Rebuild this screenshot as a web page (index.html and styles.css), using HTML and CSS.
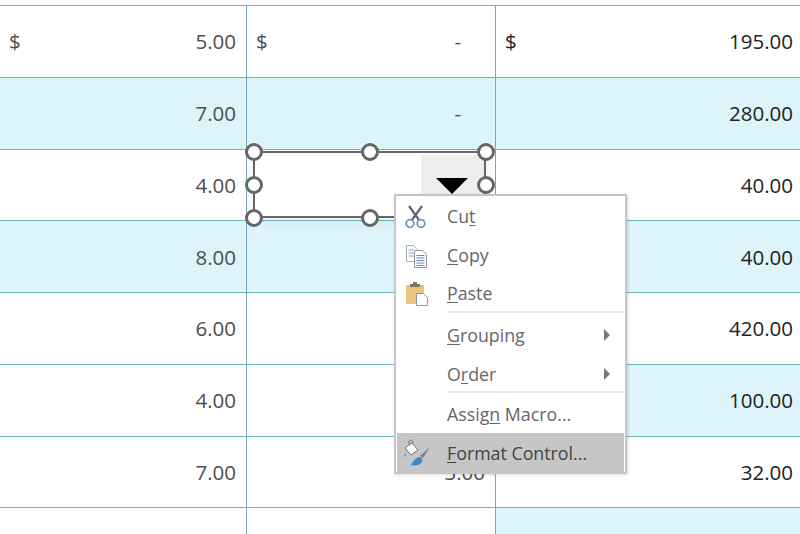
FILE: index.html
```html
<!DOCTYPE html>
<html lang="en">
<head>
    <meta charset="UTF-8">
    <title>Format Control</title>
    <link rel="stylesheet" href="styles.css">
</head>
<body>
    <div class="sheet">
        <div class="row"><div class="cell"><span class="cur">$</span><span>5.00</span></div><div class="cell"><span class="cur">$</span><span class="dash">-</span></div><div class="cell dark"><span class="cur">$</span><span>195.00</span></div></div>
        <div class="row tint"><div class="cell"><span></span><span>7.00</span></div><div class="cell"><span></span><span class="dash">-</span></div><div class="cell dark"><span></span><span>280.00</span></div></div>
        <div class="row"><div class="cell"><span></span><span>4.00</span></div><div class="cell"></div><div class="cell dark"><span></span><span>40.00</span></div></div>
        <div class="row tint"><div class="cell"><span></span><span>8.00</span></div><div class="cell"></div><div class="cell dark"><span></span><span>40.00</span></div></div>
        <div class="row"><div class="cell"><span></span><span>6.00</span></div><div class="cell"></div><div class="cell dark"><span></span><span>420.00</span></div></div>
        <div class="row"><div class="cell"><span></span><span>4.00</span></div><div class="cell"></div><div class="cell dark tint"><span></span><span>100.00</span></div></div>
        <div class="row"><div class="cell"><span></span><span>7.00</span></div><div class="cell"><span></span><span>3.00</span></div><div class="cell dark"><span></span><span>32.00</span></div></div>
        <div class="row row-last"><div class="cell"></div><div class="cell"></div><div class="cell dark tint"></div></div>
    </div>

    <!-- form control with its handles -->
    <div class="control">
        <div class="arrow-box"><div class="arrow"></div></div>
        <i class="handle h-tl"></i><i class="handle h-tm"></i><i class="handle h-tr"></i>
        <i class="handle h-ml"></i><i class="handle h-mr"></i>
        <i class="handle h-bl"></i><i class="handle h-bm"></i>
    </div>

    <div class="menu">
        <div class="item">
            <svg class="icon icon-cut" width="24" height="24" viewBox="0 0 24 24"><path d="M5 1l10 14M18 1L8 15" stroke="#5f6670" stroke-width="2.200" fill="none"/><circle cx="6" cy="18.500" r="3.800" fill="none" stroke="#7390c4" stroke-width="1.800"/><circle cx="17" cy="18.500" r="3.800" fill="none" stroke="#7390c4" stroke-width="1.800"/></svg>
            <span>Cu<u>t</u></span>
        </div>
        <div class="item">
            <svg class="icon" width="24" height="24" viewBox="0 0 24 24"><path d="M1.500 1.500h7l4 4v12h-11z" fill="#fff" stroke="#a9b0b8"/><path d="M3.500 6h5M3.500 9h7M3.500 12h7" stroke="#7fa3c7"/><path d="M9.500 6.500h8l4 4v13h-12z" fill="#fff" stroke="#8d959e"/><path d="M11.500 11.500h8M11.500 14h8M11.500 16.500h8M11.500 19h8M11.500 21.500h8" stroke="#5f8bb5"/></svg>
            <span><u>C</u>opy</span>
        </div>
        <div class="item item-sep">
            <svg class="icon" width="24" height="24" viewBox="0 0 24 24"><rect x="1" y="3" width="18" height="19" fill="#eec47c"/><rect x="5" y="2" width="10" height="3" fill="#7d7668"/><rect x="8" y="0" width="4" height="3" fill="#7d7668"/><path d="M11.500 11.500h7l4 4v8h-11z" fill="#fff" stroke="#8d959e"/></svg>
            <span><u>P</u>aste</span>
        </div>
        <div class="item">
            <span><u>G</u>rouping</span><b class="sub"></b>
        </div>
        <div class="item item-sep item-sep-tight">
            <span>O<u>r</u>der</span><b class="sub"></b>
        </div>
        <div class="item">
            <span>Assig<u>n</u> Macro...</span>
        </div>
        <div class="item active">
            <svg class="icon icon-wide" width="28" height="28" viewBox="0 0 28 28"><path d="M2 10l7-5 6 7-7 5z" fill="#fff" stroke="#6d6d6d"/><path d="M6 6c-1-5 4-5 4-1" fill="none" stroke="#6d6d6d"/><path d="M27 9l-10 9 3 2z" fill="#77808a"/><path d="M7 27c3-1 4-7 9-8 3 0 4 3 3 5-1 3-8 4-12 3z" fill="#3f86c4"/><path d="M2 16c-2 3 2 4 1 0z" fill="#4a9ad4"/></svg>
            <span><u>F</u>ormat Control...</span>
        </div>
    </div>
</body>
</html>
```

FILE: styles.css
```css
html {
    overflow: hidden;
}
body {
    margin: 0;
    width: 800px;
    height: 534px;
    overflow: hidden;
    position: relative;
    background-color: #fff;
    font-family: "Open Sans", sans-serif;
    font-size: 20.500px;
    color: #4d4d4d;
}

/* sheet */
.sheet {
    margin-top: 5px;
    border-top: 1px solid #6fb3c4;
}
.row {
    display: grid;
    grid-template-columns: 247px 249px 304px;
    height: 71.750px;
    box-sizing: border-box;
    border-bottom: 1px solid #6fb3c4;
}
.row-last {
    height: 26px;
    border-bottom: none;
}
.row.tint, .cell.tint {
    background-color: #dcf4fa;
}
.cell {
    display: flex;
    justify-content: space-between;
    align-items: center;
    padding: 0 10px 0 9px;
    border-right: 1px solid #6fa9bb;
    box-sizing: border-box;
}
.dark {
    color: #222;
    border-right: none;
    padding-right: 7px;
}
.dash {
    padding-right: 24px;
}

/* control */
.control {
    position: absolute;
    left: 253px;
    top: 151px;
    width: 233px;
    height: 67px;
    box-sizing: border-box;
    border: 2px solid #666;
    background-color: #fff;
    box-shadow: 0 3px 10px rgba(0, 0, 0, 0.08);
}
.arrow-box {
    position: absolute;
    right: 0;
    top: 2px;
    bottom: 0;
    width: 63px;
    background-color: #eee;
}
.arrow {
    position: absolute;
    left: 15px;
    top: 23px;
    border-left: 16px solid transparent;
    border-right: 16px solid transparent;
    border-top: 16px solid #000;
}
.handle {
    position: absolute;
    width: 18px;
    height: 18px;
    box-sizing: border-box;
    border: 3px solid #666;
    border-radius: 50%;
    background-color: #fff;
}
.h-tl { left: -10px; top: -10px; }
.h-tm { left: 106px; top: -10px; }
.h-tr { left: 222px; top: -10px; }
.h-ml { left: -10px; top: 23px; }
.h-mr { left: 222px; top: 23px; }
.h-bl { left: -10px; top: 56px; }
.h-bm { left: 106px; top: 56px; }

/* context menu */
.menu {
    position: absolute;
    left: 394px;
    top: 194px;
    width: 233px;
    height: 280px;
    box-sizing: border-box;
    padding: 1px;
    background-color: #fff;
    border: 2px solid #c6c6c6;
    box-shadow: 1px 1px 3px rgba(0, 0, 0, 0.15);
}
.item {
    position: relative;
    height: 38.500px;
    display: flex;
    align-items: center;
    padding-left: 50px;
    font-size: 17.800px;
    color: #666;
}
.item-sep {
    margin-bottom: 3.500px;
}
.item-sep-tight {
    margin-bottom: 1.500px;
}
.item-sep::after {
    content: '';
    position: absolute;
    left: 51px;
    right: 0;
    bottom: 0;
    height: 2px;
    background-color: #e6e6e6;
}
.item u {
    text-underline-offset: 2px;
}
.icon {
    position: absolute;
    left: 8px;
    top: 8px;
}
.icon-cut {
    left: 7px;
}
.icon-wide {
    left: 6px;
    top: 5px;
}
.sub {
    position: absolute;
    right: 14px;
    top: 13px;
    border-left: 6px solid #777;
    border-top: 6px solid transparent;
    border-bottom: 6px solid transparent;
}
.active {
    height: 39px;
    background-color: #c6c6c6;
    color: #444;
}
```
